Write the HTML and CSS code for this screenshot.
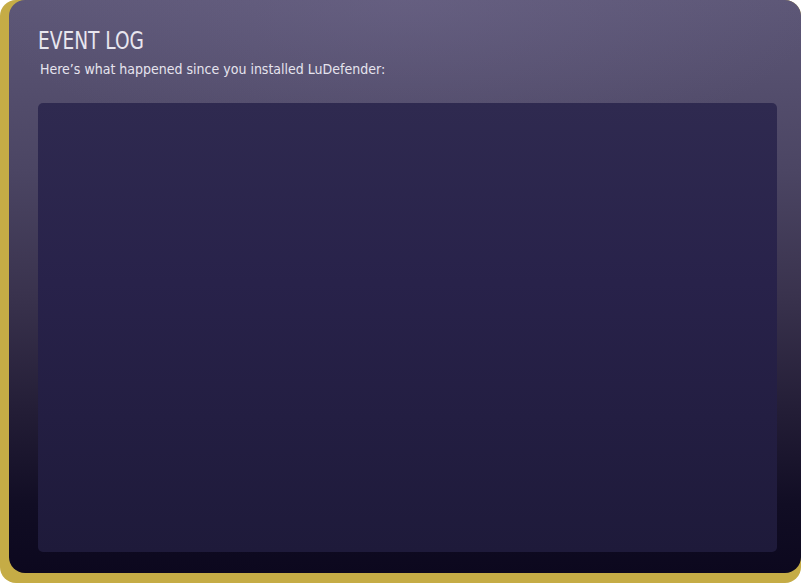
FILE: index.html
```html
<!DOCTYPE html>
<html>
<head>
<meta charset="utf-8">
<link rel="stylesheet" href="styles.css">
</head>
<body>
<div class="frame">
  <div class="card">
    <h1 class="title">EVENT LOG</h1>
    <p class="subtitle">Here’s what happened since you installed LuDefender:</p>
    <div class="log"></div>
  </div>
</div>
</body>
</html>
```
FILE: styles.css
```css
html, body {
  margin: 0;
  padding: 0;
  background: #ffffff;
}
.frame {
  width: 801px;
  height: 583px;
  background: #c5ac46;
  border-radius: 16px;
  padding: 0 0 10px 9px;
  box-sizing: border-box;
}
.card {
  height: 100%;
  border-radius: 16px;
  background:
    radial-gradient(ellipse 420px 160px at 50% 0%, rgba(120,112,150,0.3), rgba(120,112,150,0) 100%),
    linear-gradient(to bottom, #5d5777 0%, #4b4563 30%, #39324d 52%, #231d36 72%, #110d24 88%, #0c081e 100%);
  padding: 27px 24px 21px 29px;
  box-sizing: border-box;
  display: flex;
  flex-direction: column;
  font-family: "DejaVu Sans Condensed", "DejaVu Sans", sans-serif;
  color: #ecebf2;
}
.title {
  margin: 0;
  font-size: 24px;
  font-weight: normal;
  line-height: 28px;
  transform: scaleX(0.86);
  transform-origin: left;
  color: #e8e6ef;
}
.subtitle {
  margin: 5px 0 0 2px;
  font-size: 14px;
  line-height: 18px;
  color: #e6e4ee;
}
.log {
  margin-top: 25px;
  flex: 1;
  border-radius: 5px;
  background: linear-gradient(to bottom, #2f2a50 0%, #28224a 40%, #1e1a3a 100%);
}
```
